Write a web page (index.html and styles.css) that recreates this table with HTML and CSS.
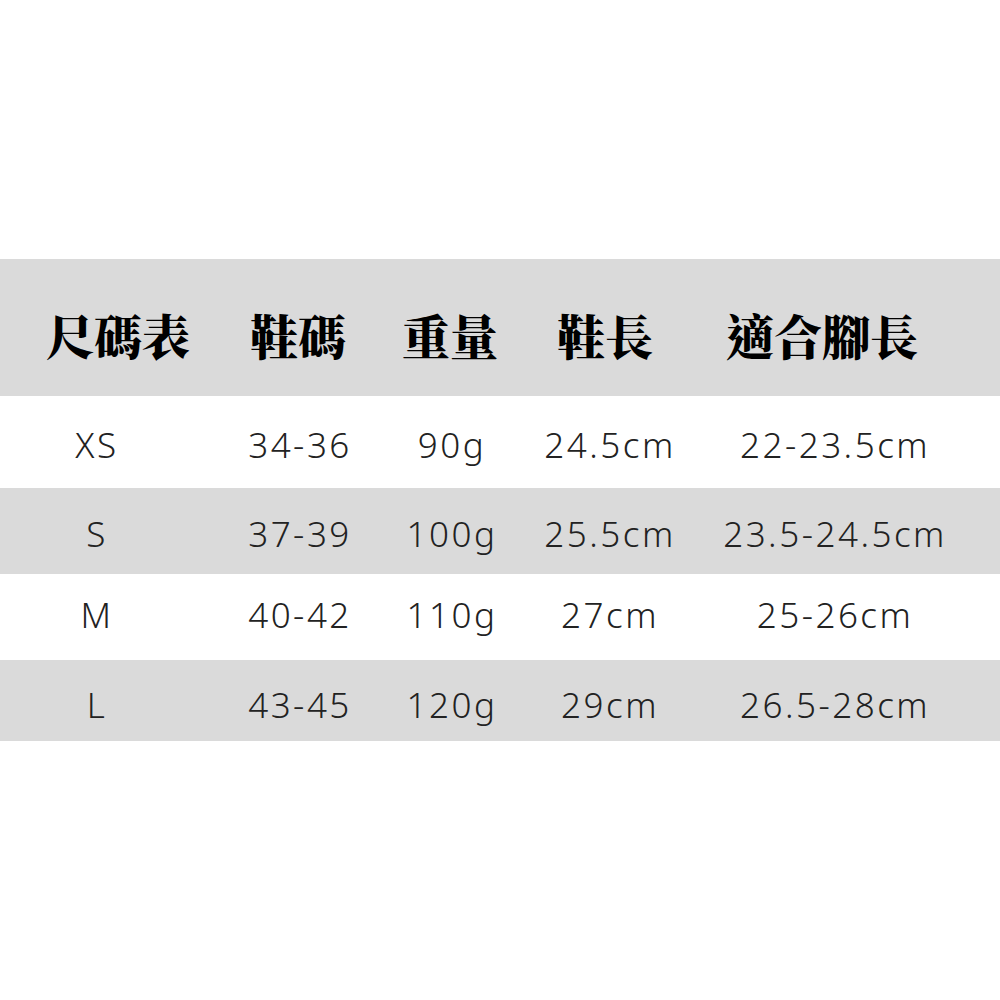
FILE: index.html
```html
<!DOCTYPE html>
<html lang="zh-Hant">
<head>
<meta charset="utf-8">
<title>尺碼表</title>
<link rel="stylesheet" href="styles.css">
</head>
<body>
<div class="page">
  <div class="table">
    <div class="row head">
      <div class="cell c1"><span>尺碼表</span></div>
      <div class="cell c2"><span>鞋碼</span></div>
      <div class="cell c3"><span>重量</span></div>
      <div class="cell c4"><span>鞋長</span></div>
      <div class="cell c5"><span>適合腳長</span></div>
    </div>
    <div class="row data r-xs">
      <div class="cell c1">XS</div>
      <div class="cell c2">34-36</div>
      <div class="cell c3">90g</div>
      <div class="cell c4">24.5cm</div>
      <div class="cell c5">22-23.5cm</div>
    </div>
    <div class="row data r-s grey">
      <div class="cell c1">S</div>
      <div class="cell c2">37-39</div>
      <div class="cell c3">100g</div>
      <div class="cell c4">25.5cm</div>
      <div class="cell c5">23.5-24.5cm</div>
    </div>
    <div class="row data r-m">
      <div class="cell c1">M</div>
      <div class="cell c2">40-42</div>
      <div class="cell c3">110g</div>
      <div class="cell c4">27cm</div>
      <div class="cell c5">25-26cm</div>
    </div>
    <div class="row data r-l grey">
      <div class="cell c1">L</div>
      <div class="cell c2">43-45</div>
      <div class="cell c3">120g</div>
      <div class="cell c4">29cm</div>
      <div class="cell c5">26.5-28cm</div>
    </div>
  </div>
</div>
</body>
</html>
```
FILE: styles.css
```css
html, body {
  margin: 0;
  padding: 0;
  background: #ffffff;
}

.page {
  width: 1000px;
  height: 1000px;
  padding-top: 259px;
  box-sizing: border-box;
}

.table {
  display: flex;
  flex-direction: column;
}

.row {
  display: grid;
  grid-template-columns: 194px 212px 92px 224px 226px 52px;
}

.cell {
  display: flex;
  justify-content: center;
  align-items: center;
  white-space: nowrap;
}

.head {
  height: 137px;
  background: #dadada;
  font-family: "Noto Serif CJK TC", "Noto Serif CJK SC", "Noto Sans CJK TC", serif;
  font-weight: 900;
  font-size: 48px;
  color: #000;
  padding-top: 14px;
  box-sizing: border-box;
}

.head .c1 { padding-left: 42px; }
.head .c2 { padding-right: 4px; }
.head .c3 { padding-right: 4px; }
.head .c4 { padding-right: 10px; }
.head .c5 { padding-right: 26px; letter-spacing: 0; }

.data {
  font-family: "Noto Sans", "Open Sans", sans-serif;
  font-weight: 300;
  font-size: 35px;
  letter-spacing: 2.5px;
  color: #222;
  box-sizing: border-box;
}

.grey { background: #dadada; }

.r-xs { height: 92px; padding-top: 4px; }
.r-s { height: 86px; padding-top: 4px; }
.r-m { height: 86px; padding-bottom: 6px; }
.r-l { height: 81px; padding-top: 8px; }
```
